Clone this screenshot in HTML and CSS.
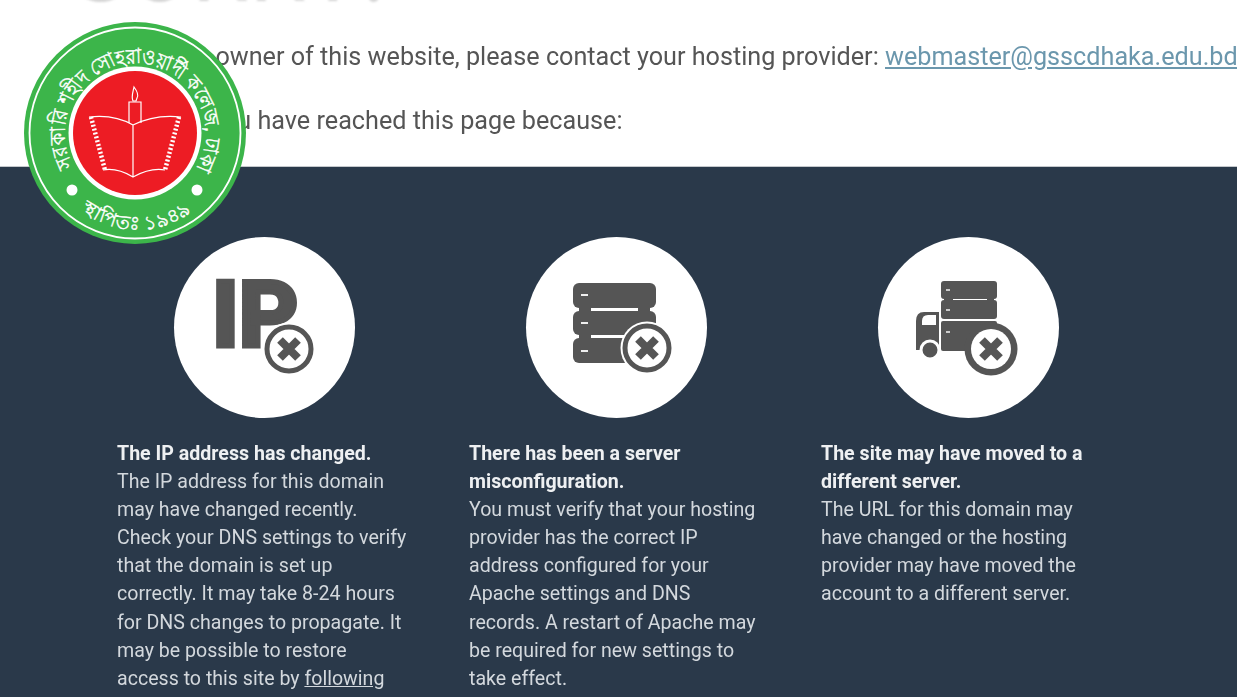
FILE: index.html
```html
<!DOCTYPE html>
<html lang="en">
<head>
    <meta charset="UTF-8">
    <meta name="viewport" content="width=device-width, initial-scale=1.0">
    <title>Sorry!</title>
    <link rel="stylesheet" href="styles.css">
</head>
<body>
    <!-- college seal, sits over the page -->
    <svg class="seal" viewBox="0 0 222 222" aria-label="College seal">
        <defs>
            <path id="sealTop" d="M49 143.600 A70 70 0 1 1 171.300 147.200"/>
            <path id="sealBottom" d="M56 188 A95 95 0 0 0 169 190"/>
        </defs>
        <circle cx="111" cy="111" r="111" fill="#3cb54a"/>
        <circle cx="111" cy="111" r="105.500" fill="none" stroke="#fff" stroke-width="1.800"/>
        <circle cx="111" cy="111" r="66.500" fill="#fff"/>
        <circle cx="111" cy="111" r="62" fill="#ed1c24"/>
        <circle cx="48" cy="168" r="5.500" fill="#fff"/>
        <circle cx="173" cy="168" r="5.500" fill="#fff"/>
        <text class="seal-text"><textPath href="#sealTop" textLength="290" lengthAdjust="spacingAndGlyphs">সরকারি শহীদ সোহরাওয়ার্দী কলেজ, ঢাকা</textPath></text>
        <text class="seal-text seal-text-small"><textPath href="#sealBottom" startOffset="50%" text-anchor="middle">স্থাপিতঃ ১৯৪৯</textPath></text>
        <g fill="none" stroke="#fff" stroke-width="1.200">
            <path d="M105 101V80h12V101"/>
            <path d="M109 79c-2-4 0-9 1-14 3 4 5 8 3 11l-1 3z"/>
            <path d="M65 95c17-2 32 1 44 8 14-7 31-10 48-8M79 148c11-2 20 1 30 7 11-6 21-9 32-7M109 103V155"/>
            <path d="M67 95l14 53M155 95l-14 53" stroke-width="4.500" stroke-dasharray="2 2"/>
        </g>
    </svg>

    <header class="top">
        <h1 class="sorry">SORRY!</h1>
        <p class="top-line">If you are the owner of this website, please contact your hosting provider: <a href="#">webmaster@gsscdhaka.edu.bd</a></p>
        <p class="top-line">It is possible you have reached this page because:</p>
    </header>

    <section class="band">
        <div class="reason">
            <div class="circle">
                <svg viewBox="0 0 181 181">
                    <text class="ip-text" x="38" y="109" textLength="86" lengthAdjust="spacingAndGlyphs">IP</text>
                    <circle cx="115" cy="112" r="26.500" fill="#fff"/>
                    <circle cx="115" cy="112" r="22" fill="none" stroke="#555" stroke-width="5"/>
                    <path d="M106 103l18 18M124 103l-18 18" stroke="#555" stroke-width="8"/>
                </svg>
            </div>
            <p><strong>The IP address has changed.</strong><br>The IP address for this domain may have changed recently. Check your DNS settings to verify that the domain is set up correctly. It may take 8-24 hours for DNS changes to propagate. It may be possible to restore access to this site by <a href="#">following these instructions</a> for clearing your DNS cache.</p>
        </div>
        <div class="reason">
            <div class="circle">
                <svg viewBox="0 0 181 181">
                    <g fill="#555">
                        <rect x="47" y="46" width="83" height="25" rx="6"/>
                        <rect x="47" y="74" width="83" height="24" rx="6"/>
                        <rect x="47" y="101" width="83" height="25" rx="6"/>
                        <path d="M53 68h12v36H53zM112 68h12v36h-12z"/>
                    </g>
                    <path d="M55 58h7M55 86h7M55 114h7" stroke="#eee" stroke-width="2"/>
                    <circle cx="121" cy="111" r="26.500" fill="#fff"/>
                    <circle cx="121" cy="111" r="22" fill="none" stroke="#555" stroke-width="5"/>
                    <path d="M112 102l18 18M130 102l-18 18" stroke="#555" stroke-width="8"/>
                </svg>
            </div>
            <p><strong>There has been a server misconfiguration.</strong><br>You must verify that your hosting provider has the correct IP address configured for your Apache settings and DNS records. A restart of Apache may be required for new settings to take effect.</p>
        </div>
        <div class="reason">
            <div class="circle">
                <svg viewBox="0 0 181 181">
                    <g fill="#555">
                        <rect x="63" y="44" width="56" height="18" rx="3"/>
                        <rect x="63" y="63" width="56" height="19" rx="3"/>
                        <path d="M66 60h9v5h-9zM109 60h7v5h-7z"/>
                        <rect x="63" y="84" width="56" height="30" rx="2"/>
                        <path d="M38 113V84q0-9 8-9h15v38H38z"/>
                        <circle cx="52" cy="113" r="9" stroke="#fff" stroke-width="3"/>
                    </g>
                    <path d="M44 88v-4q0-6 6-6h8v10z" fill="#fff"/>
                    <path d="M68 53h4M68 73h4M68 95h4" stroke="#ccc" stroke-width="2"/>
                    <circle cx="113" cy="112" r="26.500" fill="#555"/>
                    <circle cx="113" cy="112" r="20" fill="#fff"/>
                    <path d="M104 103l18 18M122 103l-18 18" stroke="#555" stroke-width="8"/>
                </svg>
            </div>
            <p><strong>The site may have moved to a different server.</strong><br>The URL for this domain may have changed or the hosting provider may have moved the account to a different server.</p>
        </div>
    </section>
</body>
</html>
```

FILE: styles.css
```css
html, body {
    margin: 0;
    height: 100%;
    overflow: hidden;
}

body {
    font-family: Roboto, "Liberation Sans", sans-serif;
    background-color: #fff;
    color: #555;
}

.seal {
    position: absolute;
    z-index: 2;
    left: 24px;
    top: 22px;
    width: 222px;
    height: 222px;
}

.seal-text {
    font-family: "Noto Sans", "Noto Sans CJK SC", sans-serif;
    font-size: 21px;
    fill: #fff;
    stroke: #fff;
    stroke-width: 0.400px;
}

.seal-text-small {
    font-size: 19px;
    letter-spacing: 0.500px;
}

.top {
    height: 166px;
    overflow: hidden;
    border-bottom: 1px solid #c4c8cc;
    padding-left: 64px;
}

.sorry {
    margin: -80px 0 0;
    padding-left: 8px;
    font-size: 92px;
    line-height: 100px;
    font-weight: 400;
    color: #d4d4d4;
    letter-spacing: 1px;
    filter: blur(1px);
}

.top-line {
    margin: 0;
    height: 64px;
    line-height: 64px;
    font-size: 25.200px;
    white-space: nowrap;
    color: #555;
    filter: blur(0.4px);
}

.sorry + .top-line {
    margin-top: 5px;
}

.top-line a {
    color: #6b97ad;
}

.band {
    height: 530px;
    background-color: #2a394a;
    padding: 70px 0 0 117px;
    box-sizing: border-box;
    display: grid;
    grid-template-columns: repeat(3, 294px);
    column-gap: 58px;
    align-content: start;
}

.circle {
    width: 181px;
    height: 181px;
    margin: 0 auto 22px;
    background-color: #fff;
    border-radius: 50%;
}

.circle svg {
    display: block;
    width: 181px;
    height: 181px;
}

.ip-text {
    font-family: Roboto, sans-serif;
    font-weight: 700;
    font-size: 90px;
    fill: #555;
    stroke: #555;
    stroke-width: 5px;
}

.reason p {
    margin: 0;
    font-size: 19.600px;
    line-height: 28.100px;
    color: #d3d8dd;
    filter: blur(0.4px);
}

.reason strong {
    color: #eef0f2;
}

.reason a {
    color: #d3d8dd;
}
```
